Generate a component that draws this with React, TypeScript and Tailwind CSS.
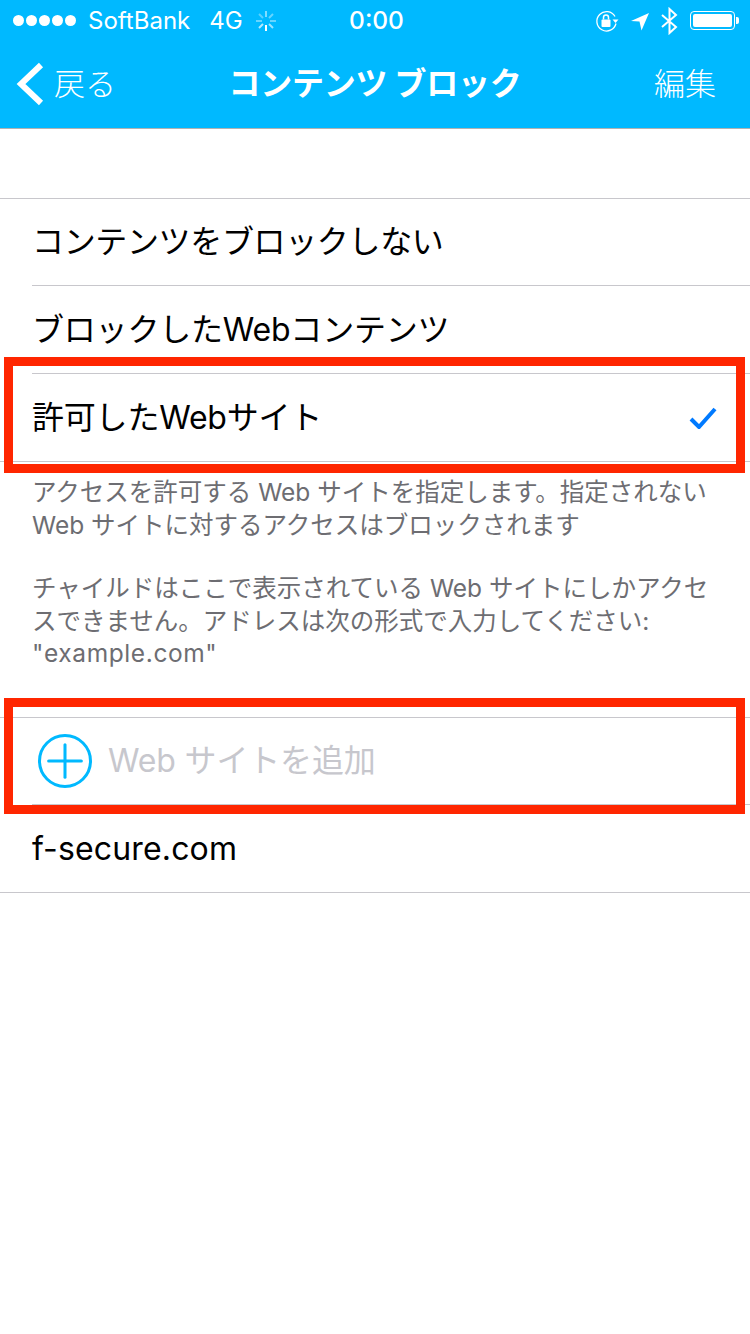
import { Plus } from "lucide-react";

const font = "font-['Inter','Noto_Sans_CJK_JP',sans-serif]";

function Row({ label, inset, first, last, tracking, children }: { label?: string; inset?: boolean; first?: boolean; last?: boolean; tracking?: string; children?: React.ReactNode }) {
    return (
        <div className={`relative flex items-center pl-[32px] pr-[32px] pb-[1px] text-[32px] text-black ${first ? "h-[87px]" : "h-[88px]"}`}>
            {children ?? <span className={tracking}>{label}</span>}
            {!last && <div className={`absolute bottom-0 right-0 h-[1px] bg-[#c8c7cc] ${inset ? "left-[32px]" : "left-0"}`} />}
        </div>
    );
}

function StatusBar() {
    return (
        <div className="h-[40px] relative flex items-center pl-[13px] pr-[11px] pt-[1px] text-white text-[24px]">
            <div className="flex gap-[2px]">
                {[0, 1, 2, 3, 4].map((i) => (
                    <div key={i} className="w-[11px] h-[11px] rounded-full bg-white" />
                ))}
            </div>
            <span className="ml-[12px]">SoftBank</span>
            <span className="ml-[19px]">4G</span>
            <svg className="ml-[12px]" width="22" height="22" viewBox="0 0 22 22" stroke="white" strokeWidth="2">
                <path d="M11 1v6" opacity="0.5" />
                <path d="M11 15v6" />
                <path d="M1 11h6" opacity="0.4" />
                <path d="M15 11h6" opacity="0.4" />
                <path d="M4 4l4 4" opacity="0.35" />
                <path d="M18 4l-4 4" opacity="0.4" />
                <path d="M4 18l4-4" opacity="0.7" />
                <path d="M18 18l-4-4" opacity="0.6" />
            </svg>
            <span className="absolute left-[3px] right-0 text-center font-medium text-[24.5px]">0:00</span>
            <div className="ml-auto flex items-center">
                <svg width="24" height="24" viewBox="0 0 24 24" fill="none" stroke="white" strokeWidth="1.300">
                    <path d="M20 7.500a9.700 9.700 0 1 0 1 7" />
                    <path d="M17.500 10.500h6l-3 3.500z" fill="white" stroke="none" />
                    <rect x="6.500" y="10.500" width="9" height="7.500" rx="1" fill="white" stroke="none" />
                    <path d="M8.500 10.500v-2a2.500 2.500 0 0 1 5 0v2" strokeWidth="1.500" />
                </svg>
                <svg className="ml-[11px]" width="20" height="20" viewBox="0 0 20 20" fill="white">
                    <path d="M19 2L1 10l8.500 0.500L11.500 19.500z" />
                </svg>
                <svg className="ml-[11px]" width="17" height="28" viewBox="0 0 17 28" fill="none" stroke="white" strokeWidth="2">
                    <path d="M1 8l14 12-6.500 6V2L15 8 1 20" />
                </svg>
                <div className="ml-[12px] w-[45px] h-[19px] border border-white rounded-[4px] p-[2px]">
                    <div className="w-full h-full bg-white rounded-[2px]" />
                </div>
                <div className="ml-[1px] w-[3px] h-[7px] bg-white rounded-r-[2px]" />
            </div>
        </div>
    );
}

function NavBar() {
    return (
        <div className="h-[88px] relative flex items-center text-white text-[31px]">
            <svg className="ml-[16px]" width="28" height="44" viewBox="0 0 28 44" fill="none" stroke="white" strokeWidth="6">
                <path d="M25 3L5 22l20 19" />
            </svg>
            <span className="ml-[10px] font-light">戻る</span>
            <span className="absolute left-0 right-0 text-center font-bold text-[32px] tracking-[-0.25px] pointer-events-none">コンテンツ ブロック</span>
            <span className="ml-auto mr-[34px] font-light">編集</span>
        </div>
    );
}

export default function App() {
    return (
        <div className={`relative w-[750px] h-[1334px] bg-white overflow-hidden ${font}`}>
            <div className="bg-[#00b9ff] border-b border-[#b2b2b2] h-[129px]">
                <StatusBar />
                <NavBar />
            </div>

            <div className="mt-[69px] border-t border-[#c8c7cc]">
                <Row first label="コンテンツをブロックしない" inset tracking="tracking-[-0.35px]" />
                <Row label="ブロックしたWebコンテンツ" inset tracking="tracking-[-0.2px]" />
                <Row>
                    <span className="tracking-[-0.2px]">許可したWebサイト</span>
                    <svg className="ml-auto mr-[1px] mt-[1px]" width="28" height="22" viewBox="0 0 28 22" fill="none" stroke="#007aff" strokeWidth="4">
                        <path d="M2 12l8 8L26 2" />
                    </svg>
                </Row>
            </div>

            <div className="pl-[32px] pr-[30px] pt-[14px] text-[24.5px] leading-[32.5px] text-[#6d6d72]">
                <p>アクセスを許可する Web サイトを指定します。指定されない Web サイトに対するアクセスはブロックされます</p>
                <p className="mt-[31px]">チャイルドはここで表示されている Web サイトにしかアクセスできません。アドレスは次の形式で入力してください: <span className="tracking-[0.6px]">"example.com"</span></p>
            </div>

            <div className="mt-[47.5px] border-t border-[#c8c7cc]">
                <Row first inset>
                    <div className="absolute left-[38px] top-[16px] w-[54px] h-[54px] rounded-full border-[3px] border-[#00b9ff] flex items-center justify-center text-[#00b9ff]">
                        <Plus className="shrink-0" size={56} strokeWidth={1.3} />
                    </div>
                    <span className="ml-[76px] text-[#c7c7cd] tracking-[-0.15px]">Web サイトを追加</span>
                </Row>
                <Row label="f-secure.com" tracking="tracking-[0.15px]" />
            </div>

            <div className="absolute left-[4px] top-[357px] w-[741px] h-[116px] border-[9px] border-[#ff2600]" />
            <div className="absolute left-[4px] top-[698px] w-[741px] h-[116px] border-[9px] border-[#ff2600]" />
        </div>
    );
}
